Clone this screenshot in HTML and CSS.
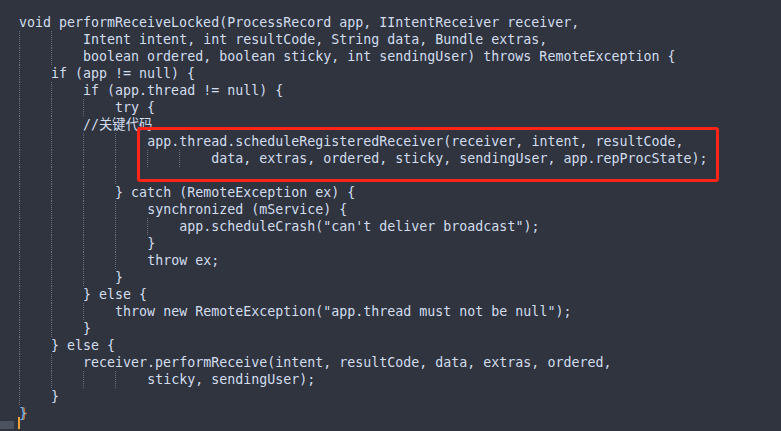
FILE: index.html
```html
<!DOCTYPE html>
<html>
<head>
<meta charset="utf-8">
<link rel="stylesheet" href="styles.css">
</head>
<body>
<div class="editor">
<div class="ln">void performReceiveLocked(ProcessRecord app, IIntentReceiver receiver,</div>
<div class="ln"><span class="g">    </span><span class="g">    </span>Intent intent, int resultCode, String data, Bundle extras,</div>
<div class="ln"><span class="g">    </span><span class="g">    </span>boolean ordered, boolean sticky, int sendingUser) throws RemoteException {</div>
<div class="ln"><span class="g">    </span>if (app != null) {</div>
<div class="ln"><span class="g">    </span><span class="g">    </span>if (app.thread != null) {</div>
<div class="ln"><span class="g">    </span><span class="g">    </span><span class="g">    </span>try {</div>
<div class="ln"><span class="g">    </span><span class="g">    </span><span class="cjk">//关键代码</span></div>
<div class="ln"><span class="g">    </span><span class="g">    </span><span class="g">    </span><span class="g">    </span>app.thread.scheduleRegisteredReceiver(receiver, intent, resultCode,</div>
<div class="ln"><span class="g">    </span><span class="g">    </span><span class="g">    </span><span class="g">    </span><span class="g">    </span><span class="g">    </span>data, extras, ordered, sticky, sendingUser, app.repProcState);</div>
<div class="ln"><span class="g">    </span><span class="g">    </span><span class="g">    </span><span class="g">    </span></div>
<div class="ln"><span class="g">    </span><span class="g">    </span><span class="g">    </span>} catch (RemoteException ex) {</div>
<div class="ln"><span class="g">    </span><span class="g">    </span><span class="g">    </span><span class="g">    </span>synchronized (mService) {</div>
<div class="ln"><span class="g">    </span><span class="g">    </span><span class="g">    </span><span class="g">    </span><span class="g">    </span>app.scheduleCrash("can't deliver broadcast");</div>
<div class="ln"><span class="g">    </span><span class="g">    </span><span class="g">    </span><span class="g">    </span>}</div>
<div class="ln"><span class="g">    </span><span class="g">    </span><span class="g">    </span><span class="g">    </span>throw ex;</div>
<div class="ln"><span class="g">    </span><span class="g">    </span><span class="g">    </span>}</div>
<div class="ln"><span class="g">    </span><span class="g">    </span>} else {</div>
<div class="ln"><span class="g">    </span><span class="g">    </span><span class="g">    </span>throw new RemoteException("app.thread must not be null");</div>
<div class="ln"><span class="g">    </span><span class="g">    </span>}</div>
<div class="ln"><span class="g">    </span>} else {</div>
<div class="ln"><span class="g">    </span><span class="g">    </span>receiver.performReceive(intent, resultCode, data, extras, ordered,</div>
<div class="ln"><span class="g">    </span><span class="g">    </span><span class="g">    </span><span class="g">    </span>sticky, sendingUser);</div>
<div class="ln"><span class="g">    </span>}</div>
<div class="ln"><span class="match">}</span></div>
<div class="last"><span class="gutter"></span><span class="cursor"></span></div>
<div class="highlight"></div>
</div>
</body>
</html>
```
FILE: styles.css
```css
html, body {
  margin: 0;
  padding: 0;
  background: #2f343e;
  width: 781px;
  height: 431px;
  overflow: hidden;
}
.editor {
  position: relative;
  padding-top: 14px;
  font-family: "DejaVu Sans Mono", "Noto Sans CJK SC", monospace;
  font-size: 13.3px;
  color: #d2ddee;
}
.ln {
  height: 17px;
  line-height: 17px;
  padding-left: 19px;
  white-space: pre;
}
.g {
  display: inline-block;
  height: 17px;
  vertical-align: top;
  background-image: repeating-linear-gradient(to bottom, #687080 0 1px, transparent 1px 2px);
  background-size: 1px 100%;
  background-repeat: no-repeat;
  background-position: 0 0;
}
.cjk {
  font-family: "DejaVu Sans Mono", "Noto Sans CJK SC", monospace;
}
.match {
  color: #7cb7f5;
  text-shadow: 1px 0 0 #d98a3a;
}
.last {
  display: flex;
  align-items: flex-end;
  height: 12px;
  margin-top: -5px;
}
.gutter {
  width: 14px;
  height: 8px;
  background: #4b5361;
}
.cursor {
  width: 2px;
  height: 12px;
  margin-left: 4px;
  background: #f0a33a;
}
.highlight {
  position: absolute;
  left: 137px;
  top: 127px;
  width: 576px;
  height: 49px;
  border: 3px solid #ff2418;
  border-radius: 3px;
}
```
